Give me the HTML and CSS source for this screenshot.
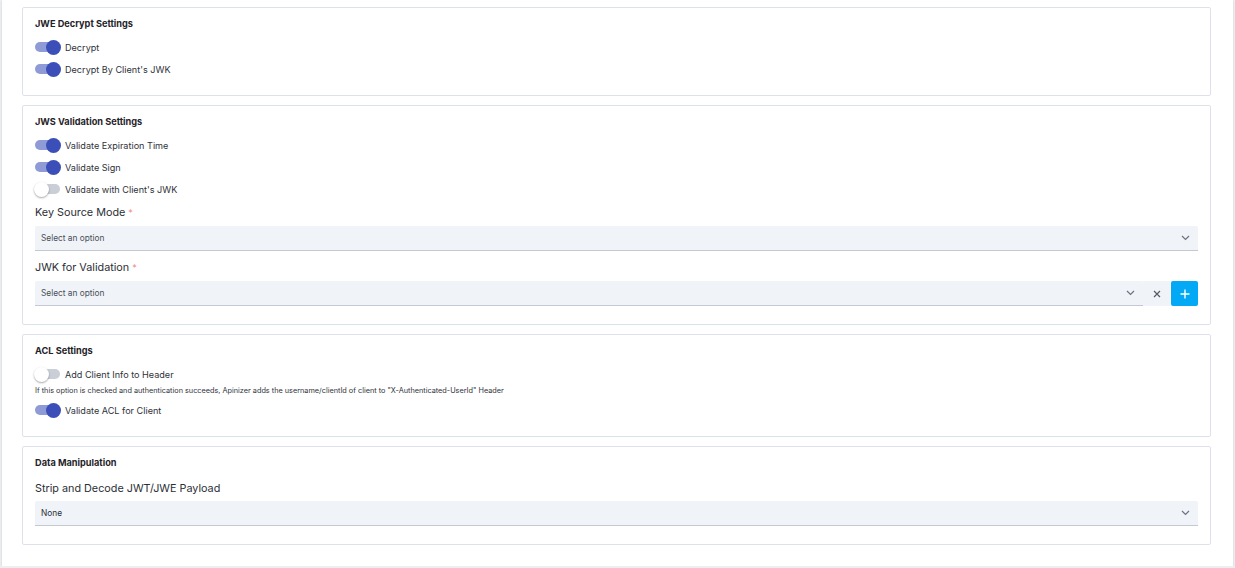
FILE: index.html
```html
<!DOCTYPE html>
<html lang="en">
<head>
  <meta charset="UTF-8" />
  <title>JWT Policy Settings</title>
  <link rel="stylesheet" href="styles.css">
</head>
<body>
  <div class="panel">

    <section class="card">
      <h3>JWE Decrypt Settings</h3>
      <div class="toggle on"><span class="track"></span><span class="text">Decrypt</span></div>
      <div class="toggle on"><span class="track"></span><span class="text">Decrypt By Client's JWK</span></div>
    </section>

    <section class="card pad-field">
      <h3>JWS Validation Settings</h3>
      <div class="toggle on"><span class="track"></span><span class="text">Validate Expiration Time</span></div>
      <div class="toggle on"><span class="track"></span><span class="text">Validate Sign</span></div>
      <div class="toggle"><span class="track"></span><span class="text">Validate with Client's JWK</span></div>

      <div class="field first">
        <label>Key Source Mode <span class="req">*</span></label>
        <div class="select">
          <span>Select an option</span>
          <svg class="chev" width="9" height="6" viewBox="0 0 9 6"><path d="M1 1l3.5 3.5L8 1" fill="none" stroke="#6b7280" stroke-width="1.2"/></svg>
        </div>
      </div>

      <div class="field">
        <label>JWK for Validation <span class="req">*</span></label>
        <div class="select-row">
          <div class="select grow">
            <span>Select an option</span>
            <svg class="chev" width="9" height="6" viewBox="0 0 9 6"><path d="M1 1l3.5 3.5L8 1" fill="none" stroke="#6b7280" stroke-width="1.2"/></svg>
          </div>
          <div class="clear">
            <svg width="8" height="8" viewBox="0 0 8 8"><path d="M1 1l6 6M7 1L1 7" stroke="#555b66" stroke-width="1.2"/></svg>
          </div>
          <div class="add">
            <svg width="10" height="10" viewBox="0 0 10 10"><path d="M5 0.5v9M0.5 5h9" stroke="#fff" stroke-width="1.4"/></svg>
          </div>
        </div>
      </div>
    </section>

    <section class="card">
      <h3>ACL Settings</h3>
      <div class="toggle"><span class="track"></span><span class="text">Add Client Info to Header</span></div>
      <p class="help">If this option is checked and authentication succeeds, Apinizer adds the username/clientId of client to "X-Authenticated-UserId" Header</p>
      <div class="toggle on tight"><span class="track"></span><span class="text">Validate ACL for Client</span></div>
    </section>

    <section class="card pad-field">
      <h3>Data Manipulation</h3>
      <div class="field first wide">
        <label>Strip and Decode JWT/JWE Payload</label>
        <div class="select">
          <span class="value">None</span>
          <svg class="chev" width="9" height="6" viewBox="0 0 9 6"><path d="M1 1l3.5 3.5L8 1" fill="none" stroke="#6b7280" stroke-width="1.2"/></svg>
        </div>
      </div>
    </section>

  </div>
</body>
</html>
```

FILE: styles.css
```css
* {
  box-sizing: border-box;
}
body {
  margin: 0;
  background: #eceef2;
  font-family: Inter, 'Noto Sans', sans-serif;
  color: #2b2f36;
}
.panel {
  width: 1231px;
  height: 566px;
  margin-left: 2px;
  background: #fff;
  padding-top: 7px;
  box-shadow: 0 1px 2px rgba(0,0,0,0.12);
  display: flex;
  flex-direction: column;
  gap: 9px;
}
.card {
  margin: 0 22px 0 20px;
  border: 1px solid #dde2ea;
  border-radius: 2px;
  padding: 10px 12px 15px 12px;
}
.card.pad-field {
  padding-bottom: 18px;
}
.card h3 {
  margin: 0 0 6px 0;
  font-size: 9.2px;
  line-height: 12px;
  font-weight: 700;
  color: #1f2329;
}
.toggle {
  display: flex;
  align-items: center;
  height: 22px;
}
.toggle .track {
  position: relative;
  width: 25px;
  height: 10px;
  border-radius: 5px;
  background: #c9ced7;
  margin-right: 5px;
}
.toggle .track::after {
  content: '';
  position: absolute;
  top: -2.5px;
  left: -1px;
  width: 15px;
  height: 15px;
  border-radius: 50%;
  background: #fff;
  box-shadow: 0 1px 2px rgba(0,0,0,0.35);
}
.toggle.on .track {
  background: #8e9bd6;
}
.toggle.on .track::after {
  left: 11px;
  background: #3c4fb8;
  box-shadow: none;
}
.toggle .text {
  font-size: 9.1px;
  color: #2f333a;
}
.help {
  margin: 0;
  font-size: 7.3px;
  line-height: 11px;
  color: #2f333a;
}
.toggle.tight {
  margin-top: 3px;
}
.field {
  margin-top: 9px;
}
.field.first {
  margin-top: 5px;
}
.field.wide {
  margin-top: 12px;
}
.field label {
  display: block;
  font-size: 10.8px;
  line-height: 15px;
  color: #2b2f36;
  margin-bottom: 6px;
}
.field.wide label {
  margin-bottom: 5px;
}
.req {
  color: #ef8a8a;
  font-size: 9px;
  vertical-align: top;
}
.select {
  height: 25px;
  background: #f0f3f7;
  border-bottom: 1px solid #c3c9d2;
  border-radius: 2px 2px 0 0;
  display: flex;
  align-items: center;
  justify-content: space-between;
  padding: 0 8px 0 6px;
  font-size: 8.3px;
  color: #4a4f57;
}
.select .value {
  color: #2b2f36;
}
.select-row {
  display: flex;
}
.select.grow {
  flex: 1;
}
.clear {
  width: 27px;
  height: 25px;
  background: #f0f3f7;
  display: flex;
  align-items: center;
  justify-content: center;
}
.add {
  width: 27px;
  height: 25px;
  margin-left: 1px;
  background: #03a9f4;
  border-radius: 2px;
  display: flex;
  align-items: center;
  justify-content: center;
}
```
